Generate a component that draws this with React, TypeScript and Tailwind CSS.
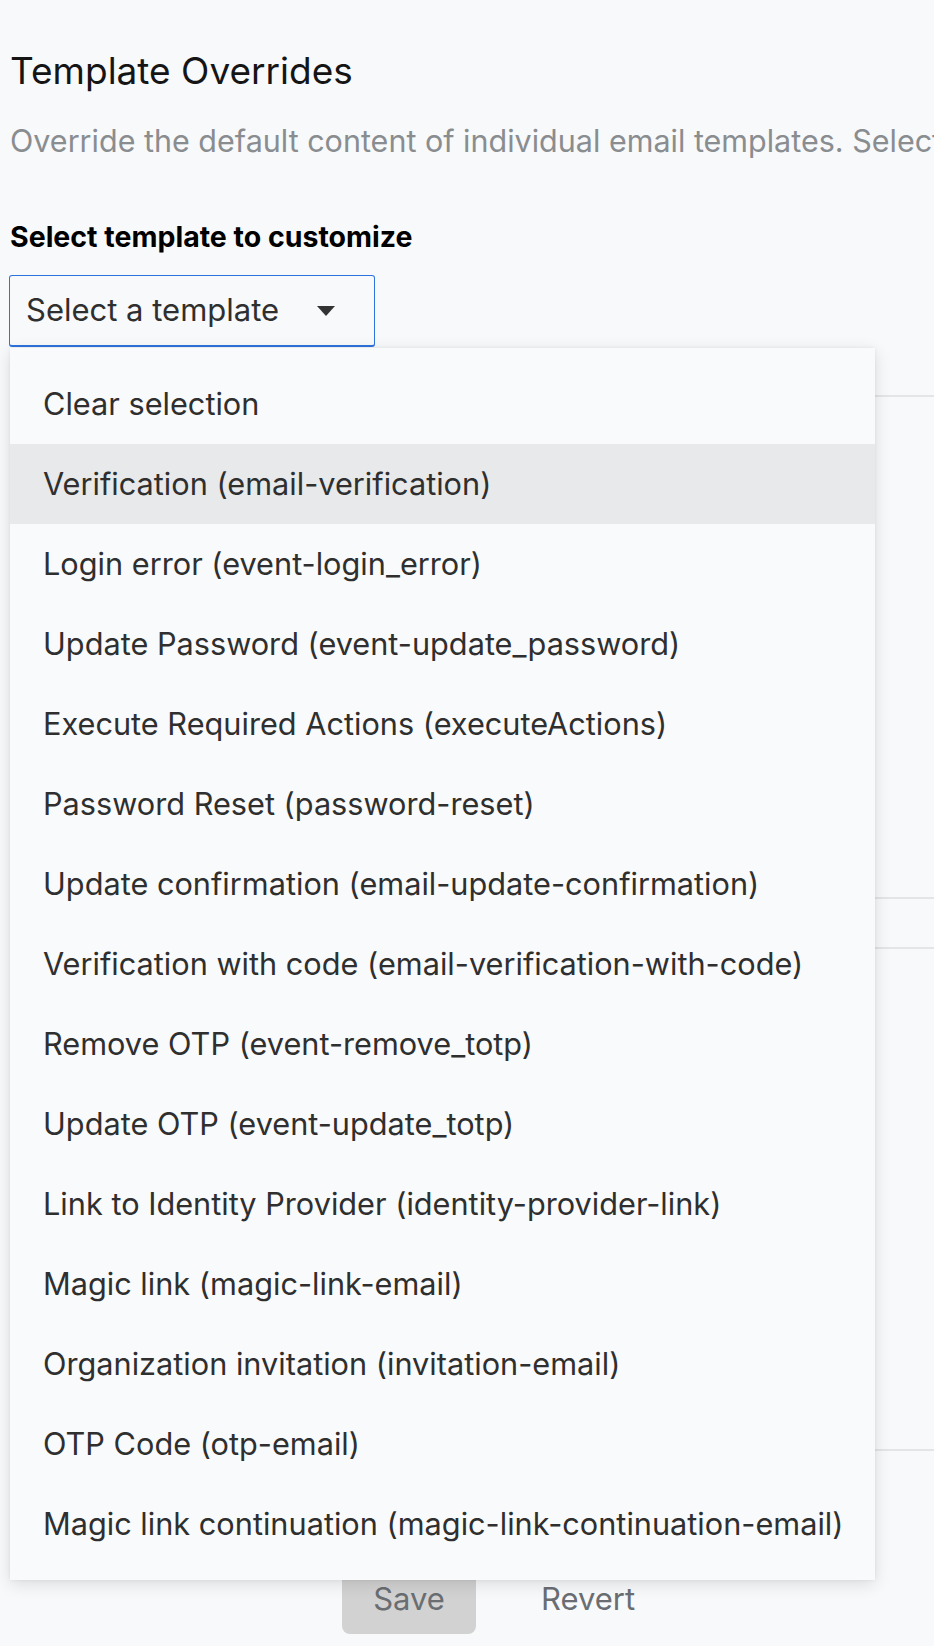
import React from 'react';

const templates = [
    'Clear selection',
    'Verification (email-verification)',
    'Login error (event-login_error)',
    'Update Password (event-update_password)',
    'Execute Required Actions (executeActions)',
    'Password Reset (password-reset)',
    'Update confirmation (email-update-confirmation)',
    'Verification with code (email-verification-with-code)',
    'Remove OTP (event-remove_totp)',
    'Update OTP (event-update_totp)',
    'Link to Identity Provider (identity-provider-link)',
    'Magic link (magic-link-email)',
    'Organization invitation (invitation-email)',
    'OTP Code (otp-email)',
    'Magic link continuation (magic-link-continuation-email)',
];

const App: React.FC = () => {
    return (
        <div
            className="relative min-h-[1646px] bg-[#f8f9fb] pl-[10px] overflow-hidden"
            style={{ fontFamily: 'Inter, "Noto Sans", sans-serif' }}
        >
            <h2 className="pt-[48px] text-[37px] leading-[46px] text-[#151515] whitespace-nowrap">
                Template Overrides
            </h2>
            <p className="mt-[27px] text-[30.5px] leading-[40px] text-[#8a8d90] whitespace-nowrap">
                Override the default content of individual email templates. Select a template to customize its subject and body.
            </p>

            <label className="mt-[58px] block text-[28.5px] leading-[36px] font-bold text-black">
                Select template to customize
            </label>

            <div className="relative mt-[20px]">
                <button className="ml-[-1px] flex h-[72px] w-[366px] items-center justify-between rounded-[3px] border border-b-2 border-[#2f73de] pl-[16px] pr-[39px] text-[31px] text-[#2f2f2f]">
                    <span>Select a template</span>
                    <svg width="18" height="10" viewBox="0 0 18 10" className="mt-[1px]">
                        <path d="M0 0 L18 0 L9 10 Z" fill="#333" />
                    </svg>
                </button>

                {/* content behind the open menu */}
                <div className="h-[50px] border-b-2 border-[#e4e5e7]" />
                <div className="h-[502px] border-b-2 border-[#e4e5e7]" />
                <div className="h-[50px] border-b-2 border-[#e4e5e7]" />
                <div className="h-[502px] border-b-2 border-[#e4e5e7]" />
                <div className="mt-[113px] flex items-center gap-[32px] pl-[332px]">
                    <button className="h-[70px] w-[134px] rounded-[8px] bg-[#d2d2d2] text-[31px] text-[#6a6e73]">
                        Save
                    </button>
                    <button className="h-[70px] px-[33px] text-[31px] text-[#6a6e73]">
                        Revert
                    </button>
                </div>

                <ul className="absolute left-0 top-[73px] w-[865px] bg-[#f9fafb] py-[16px] shadow-[0_4px_16px_rgba(3,3,3,0.12),0_0_4px_rgba(3,3,3,0.06)]">
                    {templates.map((t, i) => (
                        <li
                            key={t}
                            className={`flex h-[80px] items-center pl-[33px] text-[30.7px] text-[#2f2f2f] whitespace-nowrap ${
                                i === 1 ? 'bg-[#e8e9eb]' : ''
                            }`}
                        >
                            {t}
                        </li>
                    ))}
                </ul>
            </div>
        </div>
    );
};

export default App;
